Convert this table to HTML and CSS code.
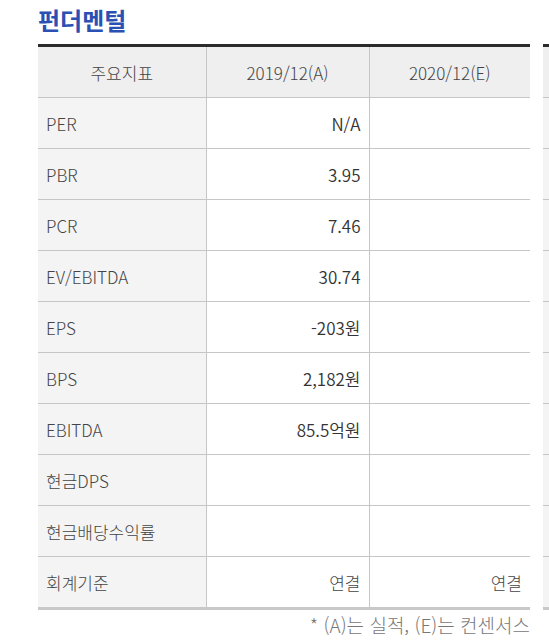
FILE: index.html
```html
<!DOCTYPE html>
<html lang="ko">
<head>
<meta charset="utf-8">
<title>펀더멘털</title>
<link rel="stylesheet" href="styles.css">
</head>
<body>
<div class="page">
  <h2 class="title">펀더멘털</h2>
  <div class="tables">
    <div class="block">
      <table class="fund">
        <colgroup><col class="c1"><col class="c2"><col class="c3"></colgroup>
        <thead>
          <tr><th>주요지표</th><th>2019/12(A)</th><th>2020/12(E)</th></tr>
        </thead>
        <tbody>
          <tr><td class="lbl">PER</td><td>N/A</td><td></td></tr>
          <tr><td class="lbl">PBR</td><td>3.95</td><td></td></tr>
          <tr><td class="lbl">PCR</td><td>7.46</td><td></td></tr>
          <tr><td class="lbl">EV/EBITDA</td><td>30.74</td><td></td></tr>
          <tr><td class="lbl">EPS</td><td>-203원</td><td></td></tr>
          <tr><td class="lbl">BPS</td><td>2,182원</td><td></td></tr>
          <tr><td class="lbl">EBITDA</td><td>85.5억원</td><td></td></tr>
          <tr><td class="lbl">현금DPS</td><td></td><td></td></tr>
          <tr><td class="lbl">현금배당수익률</td><td></td><td></td></tr>
          <tr><td class="lbl">회계기준</td><td class="lt">연결</td><td class="lt">연결</td></tr>
        </tbody>
      </table>
      <p class="note">* (A)는 실적, (E)는 컨센서스</p>
    </div>
    <div class="block side">
      <table class="fund">
        <thead><tr><th>&nbsp;</th></tr></thead>
        <tbody>
          <tr><td class="lbl">&nbsp;</td></tr>
          <tr><td class="lbl">&nbsp;</td></tr>
          <tr><td class="lbl">&nbsp;</td></tr>
          <tr><td class="lbl">&nbsp;</td></tr>
          <tr><td class="lbl">&nbsp;</td></tr>
          <tr><td class="lbl">&nbsp;</td></tr>
          <tr><td class="lbl">&nbsp;</td></tr>
          <tr><td class="lbl">&nbsp;</td></tr>
          <tr><td class="lbl">&nbsp;</td></tr>
          <tr><td class="lbl">&nbsp;</td></tr>
        </tbody>
      </table>
    </div>
  </div>
</div>
</body>
</html>
```

FILE: styles.css
```css
html, body {
  margin: 0;
  padding: 0;
  background: #fff;
  overflow: hidden;
}
body {
  font-family: "Noto Sans CJK KR", "Noto Sans", sans-serif;
  color: #333;
}
.page {
  padding: 0 0 0 38px;
  width: 700px;
}
.title {
  margin: 0;
  height: 44px;
  line-height: 40px;
  font-size: 24px;
  font-weight: 700;
  color: #2a50b4;
  letter-spacing: 0;
}
.tables {
  display: flex;
  gap: 13px;
  align-items: flex-start;
}
.block {
  width: 492px;
  flex: none;
}
.side {
  width: 200px;
}
.fund {
  width: 100%;
  border-collapse: collapse;
  border-top: 3px solid #2b2b2b;
  border-bottom: 3px solid #c8c8c8;
  table-layout: fixed;
}
.c1 { width: 168px; }
.c2 { width: 163px; }
.c3 { width: 161px; }
.fund th {
  height: 50px;
  padding: 0;
  background: #efefef;
  font-weight: 300;
  font-size: 17px;
  color: #444;
  text-align: center;
  border-left: 1px solid #c6c6c6;
  border-bottom: 1px solid #c6c6c6;
}
.fund th:first-child { border-left: none; }
.fund td {
  height: 50px;
  padding: 0 8px;
  font-size: 17px;
  font-weight: 350;
  color: #333;
  text-align: right;
  border-left: 1px solid #c6c6c6;
  border-bottom: 1px solid #c6c6c6;
}
.fund td.lt {
  font-weight: 300;
  color: #444;
}
.fund td.lbl {
  text-align: left;
  background: #f4f4f4;
  border-left: none;
  font-weight: 300;
  color: #444;
}
.fund tbody tr:last-child td { border-bottom: none; }
.note {
  margin: 1px 0 0;
  text-align: right;
  font-size: 19px;
  font-weight: 300;
  color: #777;
  line-height: 28px;
}
```
